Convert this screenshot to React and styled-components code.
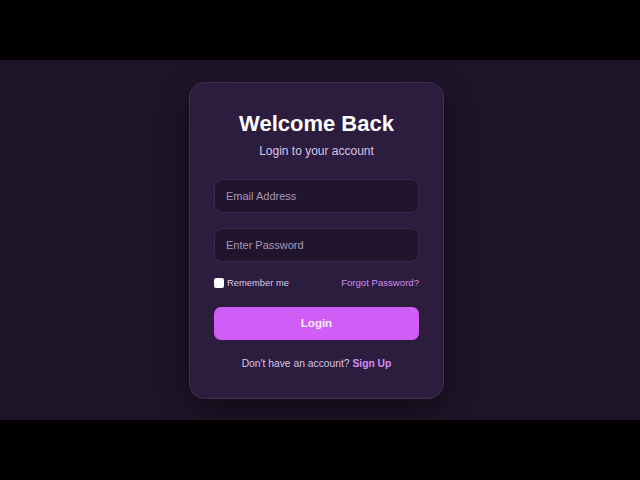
import React from "react";
import styled, { createGlobalStyle } from "styled-components";

const Global = createGlobalStyle`
  html, body { margin: 0; padding: 0; background: #000; }
  body { font-family: "Liberation Sans", Arial, sans-serif; }
  * { box-sizing: border-box; }
`;

const Frame = styled.div`
  width: 640px;
  height: 480px;
  display: flex;
  flex-direction: column;
  justify-content: center;
  background: #000;
`;

const Stage = styled.main`
  height: 360px;
  background: #1e1428;
  display: flex;
  align-items: center;
  justify-content: center;
  padding-right: 7px;
`;

const Card = styled.form`
  width: 255px;
  height: 317px;
  background: #2c1c3e;
  border: 1px solid rgba(255, 255, 255, 0.09);
  border-radius: 16px;
  box-shadow: 0 10px 28px rgba(0, 0, 0, 0.45);
  padding: 28px 24px 0;
  display: flex;
  flex-direction: column;
  align-items: stretch;
`;

const Title = styled.h1`
  margin: 0;
  font-size: 22px;
  line-height: 26px;
  font-weight: 700;
  color: #ffffff;
  text-align: center;
`;

const Subtitle = styled.p`
  margin: 7px 0 0;
  font-size: 12px;
  line-height: 14px;
  color: #d7c6e6;
  text-align: center;
`;

const Field = styled.input`
  height: 34px;
  margin-top: ${(p) => p.$gap}px;
  padding: 0 11px;
  background: #21142d;
  border: 1px solid rgba(190, 140, 230, 0.16);
  border-radius: 8px;
  color: #fff;
  font-family: "Liberation Sans", Arial, sans-serif;
  font-size: 11px;
  outline: none;
  &::placeholder { color: #a997b6; }
`;

const Row = styled.div`
  margin-top: 14px;
  height: 14px;
  display: flex;
  align-items: center;
  justify-content: space-between;
`;

const CheckLabel = styled.label`
  display: flex;
  align-items: center;
  gap: 3px;
  font-size: 9.4px;
  color: #d9c9e6;
`;

const Check = styled.input`
  appearance: none;
  width: 10px;
  height: 10px;
  margin: 0;
  background: #fff;
  border-radius: 2px;
`;

const Forgot = styled.a`
  font-size: 9.6px;
  color: #d28cec;
  text-decoration: none;
`;

const Button = styled.button`
  margin-top: 17px;
  height: 33px;
  border: none;
  border-radius: 7px;
  background: #d05ef6;
  color: #fbeeff;
  font-family: "Liberation Sans", Arial, sans-serif;
  font-size: 11.5px;
  font-weight: 700;
`;

const Footer = styled.p`
  margin: 18px 0 0;
  font-size: 10.3px;
  line-height: 12px;
  color: #d7c5e4;
  text-align: center;
`;

const SignUp = styled.a`
  font-weight: 700;
  color: #d68ff2;
  text-decoration: none;
`;

export default function App() {
  return (
    <>
      <Global />
      <Frame>
        <Stage>
          <Card onSubmit={(e) => e.preventDefault()}>
            <Title>Welcome Back</Title>
            <Subtitle>Login to your account</Subtitle>
            <Field $gap={21} type="email" placeholder="Email Address" />
            <Field $gap={15} type="password" placeholder="Enter Password" />
            <Row>
              <CheckLabel>
                <Check type="checkbox" />
                Remember me
              </CheckLabel>
              <Forgot href="#">Forgot Password?</Forgot>
            </Row>
            <Button type="submit">Login</Button>
            <Footer>
              Don't have an account? <SignUp href="#">Sign Up</SignUp>
            </Footer>
          </Card>
        </Stage>
      </Frame>
    </>
  );
}
